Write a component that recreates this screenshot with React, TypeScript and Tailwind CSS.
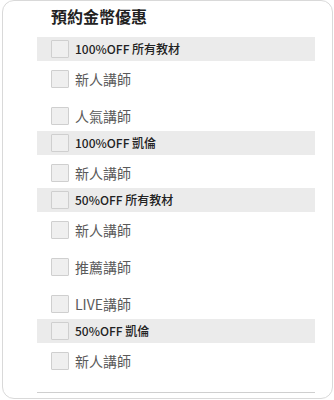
import React from "react";

type Group = { title: string; items: string[] };

const groups: Group[] = [
  { title: "100%OFF 所有教材", items: ["新人講師", "人氣講師"] },
  { title: "100%OFF 凱倫", items: ["新人講師"] },
  { title: "50%OFF 所有教材", items: ["新人講師", "推薦講師", "LIVE講師"] },
  { title: "50%OFF 凱倫", items: ["新人講師"] },
];

function Box() {
  return <span className="block w-[18px] h-[18px] shrink-0 bg-[#efefef] border border-[#cfcfcf] rounded-[1px]" />;
}

export default function App() {
  return (
    <div
      className="w-[334px] h-[400px] bg-white overflow-hidden"
      style={{ fontFamily: '"Noto Sans CJK TC", "Noto Sans", sans-serif' }}
    >
      <div className="ml-[2px] w-[331px] h-[399px] border border-[#d9d9d9] rounded-[12px] bg-white pl-[34px] pr-[17px] pt-[3px]">
        <h2 className="pl-[14px] text-[16px] leading-[24px] font-bold text-[#222] mb-[9px]">預約金幣優惠</h2>
        {groups.map((g) => (
          <div key={g.title}>
            <div className="h-[24px] bg-[#ebebeb] flex items-center pl-[14px] gap-[6px]">
              <Box />
              <span className="text-[12px] font-medium text-[#222] leading-none">{g.title}</span>
            </div>
            <div className="flex flex-col gap-[19px] pt-[9px] pb-[6px] pl-[14px]">
              {g.items.map((it, i) => (
                <div key={i} className="h-[18px] flex items-center gap-[6px]">
                  <Box />
                  <span className="text-[14px] text-[#5a5a5a] leading-none">{it}</span>
                </div>
              ))}
            </div>
          </div>
        ))}
        <div className="mt-[16px] border-t border-[#cfcfcf]" />
      </div>
    </div>
  );
}
